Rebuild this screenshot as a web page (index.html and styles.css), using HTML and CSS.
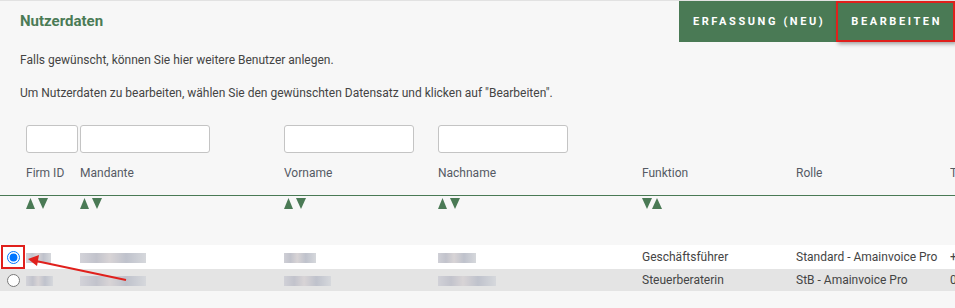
FILE: index.html
```html
<!DOCTYPE html>
<html lang="de">
<head>
  <meta charset="UTF-8">
  <title>Nutzerdaten</title>
  <link rel="stylesheet" href="styles.css">
</head>
<body>

  <!-- Header with title and actions -->
  <div class="topbar">
    <h1 class="title">Nutzerdaten</h1>
    <div class="actions">
      <button class="btn">Erfassung (neu)</button>
      <button class="btn marked">Bearbeiten</button>
    </div>
  </div>

  <div class="intro">
    <p>Falls gewünscht, können Sie hier weitere Benutzer anlegen.</p>
    <p>Um Nutzerdaten zu bearbeiten, wählen Sie den gewünschten Datensatz und klicken auf "Bearbeiten".</p>
  </div>

  <!-- User table -->
  <div class="table">
    <div class="head">
      <div class="row filters">
        <div></div>
        <div><input type="text" class="short"></div>
        <div><input type="text"></div>
        <div><input type="text"></div>
        <div><input type="text"></div>
        <div></div>
        <div></div>
        <div></div>
      </div>
      <div class="row labels">
        <div></div>
        <div>Firm ID</div>
        <div>Mandante</div>
        <div>Vorname</div>
        <div>Nachname</div>
        <div>Funktion</div>
        <div>Rolle</div>
        <div>Telefon</div>
      </div>
    </div>

    <div class="row sorts">
      <div></div>
      <div><svg class="sort" viewBox="0 0 24 11"><polygon points="0,11 4.5,0 9,11"/><polygon points="12,0 22,0 17,11"/></svg></div>
      <div><svg class="sort" viewBox="0 0 24 11"><polygon points="0,11 4.5,0 9,11"/><polygon points="12,0 22,0 17,11"/></svg></div>
      <div><svg class="sort" viewBox="0 0 24 11"><polygon points="0,11 4.5,0 9,11"/><polygon points="12,0 22,0 17,11"/></svg></div>
      <div><svg class="sort" viewBox="0 0 24 11"><polygon points="0,11 4.5,0 9,11"/><polygon points="12,0 22,0 17,11"/></svg></div>
      <div><svg class="sort" viewBox="0 0 24 11"><polygon points="0,0 10,0 5,11"/><polygon points="10,11 15,0 20,11"/></svg></div>
      <div></div>
      <div></div>
    </div>

    <div class="rows">
      <div class="row data selected">
        <div class="pick"><input type="radio" name="user" checked></div>
        <div><span class="masked w25"></span></div>
        <div><span class="masked w66"></span></div>
        <div><span class="masked w34 shift"></span></div>
        <div><span class="masked w40 shift"></span></div>
        <div>Geschäftsführer</div>
        <div>Standard - Amainvoice Pro</div>
        <div>+49</div>
      </div>
      <div class="row data alt">
        <div class="pick"><input type="radio" name="user"></div>
        <div><span class="masked w27"></span></div>
        <div><span class="masked w66"></span></div>
        <div><span class="masked w49 shift"></span></div>
        <div><span class="masked w60 shift"></span></div>
        <div>Steuerberaterin</div>
        <div>StB - Amainvoice Pro</div>
        <div>0</div>
      </div>

      <!-- annotation: marker box and arrow -->
      <svg class="note" width="140" height="48" viewBox="0 0 140 48">
        <rect x="2" y="1" width="22" height="22" fill="none" stroke="#e0201c" stroke-width="2"/>
        <line x1="126" y1="35" x2="36" y2="16" stroke="#e0201c" stroke-width="2"/>
        <polygon points="28,14 39,10 37,21" fill="#e0201c"/>
      </svg>
    </div>
  </div>

</body>
</html>
```

FILE: styles.css
```css
html, body {
  margin: 0;
  padding: 0;
  height: 100%;
  overflow: hidden;
}

body {
  background-color: #f7f7f7;
  border-top: 1px solid #e2e2e2;
  font-family: Roboto, "Liberation Sans", sans-serif;
  color: #444;
  font-size: 12px;
}

.topbar {
  display: flex;
  justify-content: space-between;
  align-items: stretch;
  height: 41px;
}

.title {
  margin: 0;
  padding-left: 20px;
  align-self: center;
  font-size: 15px;
  font-weight: bold;
  color: #4b7b56;
  padding-bottom: 2px;
}

.actions {
  display: flex;
}

.btn {
  background-color: #4a7a55;
  color: #fff;
  border: none;
  font-family: Roboto, "Liberation Sans", sans-serif;
  font-size: 11px;
  font-weight: bold;
  text-transform: uppercase;
  letter-spacing: 2.6px;
  padding: 0 11px 0 14px;
  cursor: pointer;
}

/* highlighted in the screenshot */
.btn.marked {
  border: 2px solid #e0201c;
  padding: 0 11px 0 13px;
  box-shadow: 2px 2px 4px rgba(0, 0, 0, 0.35);
}

.intro {
  padding-left: 20px;
}

.intro p {
  margin: 0;
  line-height: 16px;
}

.intro p:first-child {
  margin-top: 10px;
}

.intro p + p {
  margin-top: 17px;
}

.table {
  margin-top: 24px;
}

.row {
  display: grid;
  grid-template-columns: 26px 54px 204px 154px 204px 154px 154px 1fr;
  white-space: nowrap;
}

.row > div {
  overflow: hidden;
}

input[type="text"] {
  box-sizing: border-box;
  width: 130px;
  height: 28px;
  border: 1px solid #c4c4c4;
  border-radius: 3px;
  background-color: #fff;
  margin: 0;
  display: block;
}

input.short {
  width: 52px;
}

.labels {
  padding: 12px 0 14px;
  line-height: 16px;
  color: #555a64;
}

.head {
  border-bottom: 1px solid #4a7a55;
}

.sorts {
  height: 49px;
  padding-top: 2px;
  box-sizing: border-box;
}

.sort {
  width: 24px;
  height: 11px;
  display: block;
  fill: #4a7a55;
}

.rows {
  position: relative;
}

.data {
  align-items: center;
  line-height: 16px;
}

.selected {
  background-color: #fff;
  height: 24px;
}

.alt {
  background-color: #e4e4e4;
  height: 22px;
}

.pick {
  display: flex;
  align-items: center;
}

.pick input {
  margin: 0 0 0 7px;
  width: 13px;
  height: 13px;
}

.masked {
  display: inline-block;
  height: 10px;
  vertical-align: middle;
  background: linear-gradient(90deg, #d3d3d9 0%, #c2c3cc 25%, #d8d4d6 45%, #bfc2cc 70%, #d6d8dc 100%);
  filter: blur(0.6px);
}

.shift {
  margin-left: -2px;
}

.w25 { width: 25px; }
.w27 { width: 27px; }
.w34 { width: 34px; }
.w40 { width: 40px; }
.w49 { width: 49px; }
.w60 { width: 60px; }
.w66 { width: 66px; }

.note {
  position: absolute;
  left: 0;
  top: 0;
  pointer-events: none;
}
```
